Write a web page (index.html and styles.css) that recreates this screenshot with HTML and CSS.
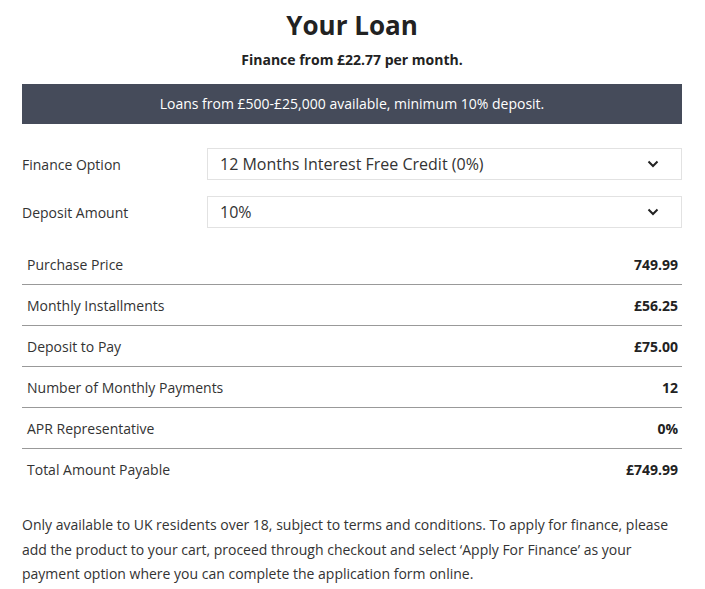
FILE: index.html
```html
<!DOCTYPE html>
<html lang="en">
<head>
  <meta charset="UTF-8">
  <title>Your Loan</title>
  <link rel="stylesheet" href="styles.css">
</head>
<body>

  <div class="loan">
    <h2>Your Loan</h2>
    <p class="from">Finance from £22.77 per month.</p>

    <div class="banner">Loans from £500-£25,000 available, minimum 10% deposit.</div>

    <div class="field">
      <label>Finance Option</label>
      <div class="select">
        <span>12 Months Interest Free Credit (0%)</span>
        <svg width="12" height="8" viewBox="0 0 12 8"><path d="M1.5 1.5 L6 6 L10.5 1.5" fill="none" stroke="#222" stroke-width="2"/></svg>
      </div>
    </div>
    <div class="field">
      <label>Deposit Amount</label>
      <div class="select">
        <span>10%</span>
        <svg width="12" height="8" viewBox="0 0 12 8"><path d="M1.5 1.5 L6 6 L10.5 1.5" fill="none" stroke="#222" stroke-width="2"/></svg>
      </div>
    </div>

    <table class="summary">
      <tr><td>Purchase Price</td><td>749.99</td></tr>
      <tr><td>Monthly Installments</td><td>£56.25</td></tr>
      <tr><td>Deposit to Pay</td><td>£75.00</td></tr>
      <tr><td>Number of Monthly Payments</td><td>12</td></tr>
      <tr><td>APR Representative</td><td>0%</td></tr>
      <tr><td>Total Amount Payable</td><td>£749.99</td></tr>
    </table>

    <p class="note">Only available to UK residents over 18, subject to terms and conditions. To apply for finance, please add the product to your cart, proceed through checkout and select ‘Apply For Finance’ as your payment option where you can complete the application form online.</p>
  </div>

</body>
</html>
```
FILE: styles.css
```css
body {
  margin: 0;
  font-family: "Open Sans", Arial, sans-serif;
  color: #333;
  background: #fff;
}

.loan {
  padding: 0 23px 0 22px;
}

h2 {
  margin: 0;
  padding-top: 6px;
  text-align: center;
  font-size: 26px;
  line-height: 38px;
  font-weight: 700;
  color: #222;
}

.from {
  margin: 6px 0 14px;
  text-align: center;
  font-size: 14px;
  font-weight: 700;
  color: #222;
  line-height: 20px;
}

.banner {
  background: #454b5a;
  color: #fff;
  text-align: center;
  font-size: 14px;
  height: 40px;
  line-height: 40px;
}

.field {
  display: flex;
  align-items: center;
  margin-top: 24px;
}

.field + .field {
  margin-top: 16px;
}

.field label {
  width: 185px;
  font-size: 14px;
}

.select {
  flex: 1;
  height: 30px;
  border: 1px solid #e2e2e2;
  display: flex;
  align-items: center;
  justify-content: space-between;
  padding: 0 22px 0 12px;
  font-size: 16px;
}

.summary {
  width: 100%;
  border-collapse: collapse;
  margin-top: 16px;
  font-size: 14px;
}

.summary td {
  padding: 0 4px 0 5px;
  height: 40px;
  border-bottom: 1px solid #999;
}

.summary tr:last-child td {
  border-bottom: none;
}

.summary td:last-child {
  text-align: right;
  font-weight: 700;
  color: #222;
}

.note {
  margin: 24px 0 0;
  font-size: 14px;
  line-height: 24.5px;
}
```
